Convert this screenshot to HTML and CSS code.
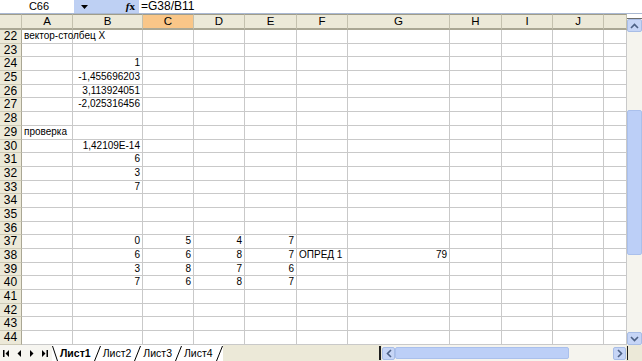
FILE: index.html
```html
<!doctype html>
<html lang="ru">
<head>
  <meta charset="utf-8"/>
  <title>Лист1</title>
  <link rel="stylesheet" href="styles.css">
</head>
<body>
  <!-- formula bar -->
  <div class="fbar">
    <div class="namebox">C66</div>
    <div class="fbtns">
      <svg class="drop" width="7" height="4" viewBox="0 0 7 4"><path d="M0 0 H7 L3.5 4 Z" fill="#000"/></svg>
      <span class="fx"><i>f</i>x</span>
    </div>
    <div class="formula">=G38/B11</div>
  </div>

  <!-- sheet + vertical scroll -->
  <div class="work">
    <div id="sheet" class="sheet"></div>
    <div class="vscroll">
      <div class="sbtn up"><svg width="9" height="6" viewBox="0 0 9 6"><path d="M1 5 L4.5 1.5 L8 5" fill="none" stroke="#4d6185" stroke-width="1.6"/></svg></div>
      <div class="vtrack top"></div>
      <div class="vthumb"></div>
      <div class="vtrack"></div>
      <div class="sbtn down"><svg width="9" height="6" viewBox="0 0 9 6"><path d="M1 1 L4.5 4.5 L8 1" fill="none" stroke="#4d6185" stroke-width="1.6"/></svg></div>
    </div>
  </div>

  <!-- sheet tabs + horizontal scroll -->
  <div class="tabbar">
    <div class="nav">
      <svg width="7" height="7" viewBox="0 0 7 7"><path d="M0 0 H1.5 V7 H0 Z M6 0 V7 L2.5 3.5 Z" fill="#000"/></svg>
      <svg width="5" height="7" viewBox="0 0 5 7"><path d="M4 0 V7 L0.5 3.5 Z" fill="#000"/></svg>
      <svg width="5" height="7" viewBox="0 0 5 7"><path d="M1 0 V7 L4.5 3.5 Z" fill="#000"/></svg>
      <svg width="7" height="7" viewBox="0 0 7 7"><path d="M1 0 V7 L4.5 3.5 Z M5.5 0 H7 V7 H5.5 Z" fill="#000"/></svg>
    </div>
    <div class="tabs">
      <svg class="sep" width="6" height="15"><path d="M0.5 0 L5.5 15" stroke="#000"/></svg>
      <span class="tab active">Лист1</span>
      <svg class="sep" width="7" height="15"><path d="M0.5 15 L6.5 0" stroke="#000"/></svg>
      <span class="tab">Лист2</span>
      <svg class="sep" width="7" height="15"><path d="M0.5 15 L6.5 0" stroke="#000"/></svg>
      <span class="tab">Лист3</span>
      <svg class="sep" width="7" height="15"><path d="M0.5 15 L6.5 0" stroke="#000"/></svg>
      <span class="tab">Лист4</span>
      <svg class="sep" width="7" height="15"><path d="M0.5 15 L6.5 0" stroke="#000"/></svg>
    </div>
    <div class="filler"></div>
    <div class="split"></div>
    <div class="hscroll">
      <div class="sbtn"><svg width="6" height="9" viewBox="0 0 6 9"><path d="M5 1 L1.5 4.5 L5 8" fill="none" stroke="#4d6185" stroke-width="1.6"/></svg></div>
      <div class="hthumb"></div>
      <div class="htrack"></div>
      <div class="sbtn"><svg width="6" height="9" viewBox="0 0 6 9"><path d="M1 1 L4.5 4.5 L1 8" fill="none" stroke="#4d6185" stroke-width="1.6"/></svg></div>
    </div>
    <div class="split thin"></div>
    <div class="corner"></div>
  </div>

  <script>
    const cols = ['A','B','C','D','E','F','G','H','I','J',''];
    const cells = {
      22: {A: 'вектор-столбец X'},
      24: {B: '1'},
      25: {B: '-1,455696203'},
      26: {B: '3,113924051'},
      27: {B: '-2,025316456'},
      29: {A: 'проверка'},
      30: {B: '1,42109E-14'},
      31: {B: '6'},
      32: {B: '3'},
      33: {B: '7'},
      37: {B: '0', C: '5', D: '4', E: '7'},
      38: {B: '6', C: '6', D: '8', E: '7', F: 'ОПРЕД 1', G: '79'},
      39: {B: '3', C: '8', D: '7', E: '6'},
      40: {B: '7', C: '6', D: '8', E: '7'}
    };
    const sheet = document.getElementById('sheet');
    const add = (cls, text) => {
      const d = document.createElement('div');
      d.className = cls;
      d.textContent = text || '';
      sheet.appendChild(d);
    };

    add('corner-h');
    cols.forEach(c => add(c === 'C' ? 'colh sel' : 'colh', c));
    for (let r = 22; r <= 44; r++) {
      add('rowh', r);
      cols.forEach(c => {
        const v = (cells[r] || {})[c];
        const isText = v && isNaN(v.replace(',', '.'));
        add(isText ? 'cell txt' : 'cell', v);
      });
    }
  </script>
</body>
</html>
```

FILE: styles.css
```css
*{box-sizing:border-box;margin:0;padding:0}
html,body{width:642px;height:361px;overflow:hidden;background:#fff;color:#000;font-family:"Liberation Sans",Arial,sans-serif}
body{display:flex;flex-direction:column}

/* ---------- formula bar ---------- */
.fbar{height:14px;display:flex;align-items:center;border-bottom:1px solid #a9b8d2;font-size:12px;line-height:13px}
.namebox{width:74px;text-align:center;font-size:11px;padding-left:4px}
.fbtns{width:65px;height:13px;background:#bed0f3;display:flex;align-items:center;justify-content:space-between;padding:0 4px 0 7px}
.fx{font-family:"Liberation Serif",serif;font-size:11px;font-weight:bold}
.formula{padding-left:2px}

/* ---------- sheet grid ---------- */
.work{flex:1;display:flex;min-height:0}
.sheet{
  width:627px;
  display:grid;
  grid-template-columns:22px 51px 70px 51px 51px 52px 51px 102px 52px 51px 51px 23px;
  grid-template-rows:16px repeat(23,13.7px);
  font-size:10px;
}
.sheet > div{border-right:1px solid #c9c9c9;border-bottom:1px solid #c9c9c9;white-space:nowrap;overflow:visible;line-height:12px}
.corner-h,.colh{background:#ece9d8;border-top:1px solid #a09d8a;border-bottom:2px solid #aaa794 !important;border-right-color:#c4c1ae !important}
.colh{text-align:center;font-size:11.5px;line-height:13px}
.colh.sel{background:#f9c688}
.rowh{background:#ece9d8;border-right:1px solid #aaa794 !important;border-bottom-color:#cdcab7 !important;text-align:center;font-size:12px;line-height:13px !important}
.cell{text-align:right;padding-right:2px}
.cell.txt{text-align:left;padding-left:2px}

/* ---------- vertical scroll ---------- */
.vscroll{width:15px;display:flex;flex-direction:column;background:#f5f4ee;border-top:1px solid #6d6d6d;margin-top:4px}
.sbtn{display:flex;align-items:center;justify-content:center;background:#c6d5f6;border:1px solid #a8bde6;border-radius:2px}
.vscroll .sbtn{height:13px}
.vtrack.top{height:91px}
.vthumb{height:145px;background:#bccff7;border:1px solid #aac0ec;border-radius:2px}
.vtrack{flex:1}

/* ---------- tabs & horizontal scroll ---------- */
.tabbar{height:16px;display:flex;align-items:center;background:#ece9d8;font-size:10.5px}
.nav{width:52px;height:100%;display:flex;align-items:center;gap:7px;padding-left:3px;background:#f6f5f0}
.tabs{height:100%;display:flex;align-items:center;background:#fff}
.tab{padding:0 3px 0 2px;line-height:15px}
.tab.active{font-weight:bold}
.sep{flex-shrink:0}
.filler{flex:1;height:100%;background:#ece9d8}
.split{width:2px;height:14px;background:#1e1e1e;margin:0 1px}
.split.thin{width:1px}
.hscroll{width:244px;height:100%;display:flex;align-items:center;background:#f5f4ee;padding:1px 0}
.hscroll .sbtn{width:13px;height:13px}
.hthumb{width:174px;height:12px;background:#bccff7;border:1px solid #aac0ec;border-radius:2px}
.htrack{flex:1}
.corner{width:13px;height:100%;background:#ece9d8}
```
